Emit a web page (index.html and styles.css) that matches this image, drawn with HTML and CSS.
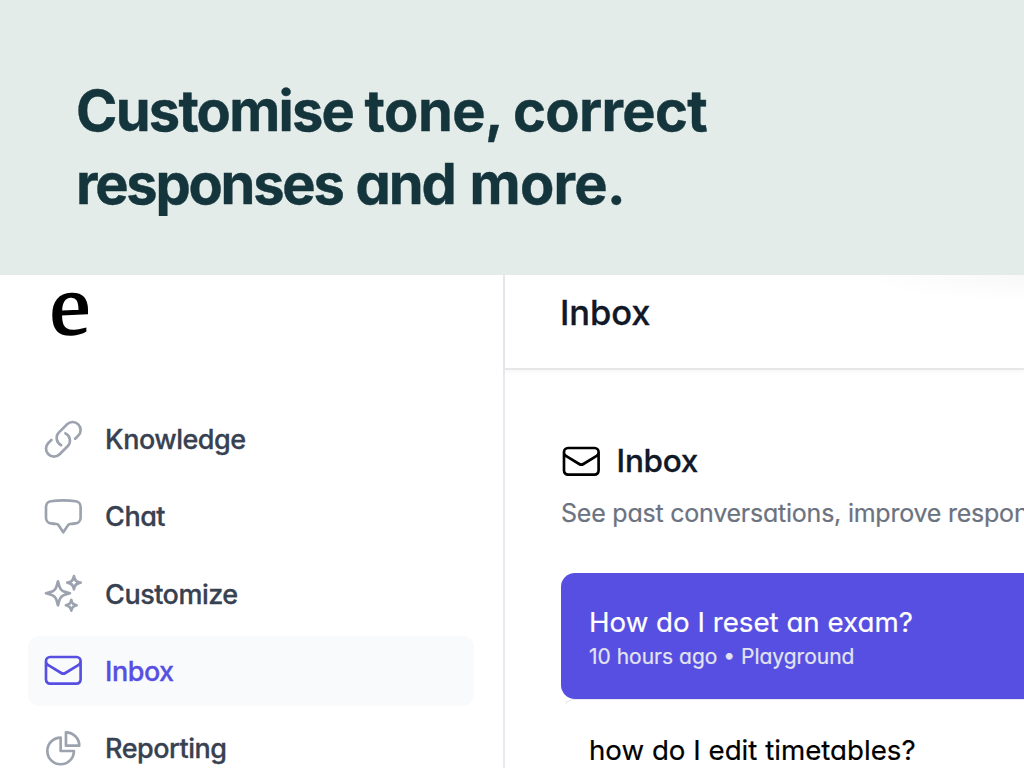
FILE: index.html
```html
<!DOCTYPE html>
<html lang="en">
<head>
<meta charset="utf-8">
<title>Inbox</title>
<link rel="stylesheet" href="styles.css">
</head>
<body>
<svg class="sprite" aria-hidden="true">
  <symbol id="mail" viewBox="0 0 24 24"><path d="M21.75 6.75v10.5a2.25 2.25 0 01-2.25 2.25h-15a2.25 2.25 0 01-2.25-2.25V6.75m19.5 0A2.25 2.25 0 0019.5 4.5h-15a2.25 2.25 0 00-2.25 2.25m19.5 0v.243a2.25 2.25 0 01-1.07 1.916l-7.5 4.615a2.25 2.25 0 01-2.36 0L3.32 8.91a2.25 2.25 0 01-1.07-1.916V6.75"/></symbol>
</svg>
<header class="hero">
  <h1 class="hero-title"><span class="line"><span class="snug">Customise</span> <span class="loose">tone,</span> <span class="open">correct</span></span><span class="line"><span class="tightest">responses</span> <span class="tight">and</span> <span class="last">more.</span></span></h1>
</header>
<div class="app">
  <aside class="sidebar">
    <div class="logo"><span class="logo-letter">e</span></div>
    <nav class="nav">
      <a class="nav-item"><svg class="icon" viewBox="0 0 24 24"><path d="M13.19 8.688a4.5 4.5 0 011.242 7.244l-4.5 4.5a4.5 4.5 0 01-6.364-6.364l1.757-1.757m13.35-.622l1.757-1.757a4.5 4.5 0 00-6.364-6.364l-4.5 4.5a4.5 4.5 0 001.242 7.244"/></svg><span>Knowledge</span></a>
      <a class="nav-item"><svg class="icon" viewBox="0 0 24 24"><path d="M2.25 12.76c0 1.6 1.123 2.994 2.707 3.227 1.068.157 2.148.279 3.238.364.466.037.893.281 1.153.671L12 21l2.652-3.978c.26-.39.687-.634 1.153-.67 1.09-.086 2.17-.208 3.238-.365 1.584-.233 2.707-1.626 2.707-3.228V6.741c0-1.602-1.123-2.995-2.707-3.228A48.394 48.394 0 0012 3c-2.392 0-4.744.175-7.043.513C3.373 3.746 2.25 5.14 2.25 6.741v6.018z"/></svg><span>Chat</span></a>
      <a class="nav-item"><svg class="icon" viewBox="0 0 24 24"><path d="M9.813 15.904L9 18.75l-.813-2.846a4.5 4.5 0 00-3.09-3.09L2.25 12l2.846-.813a4.5 4.5 0 003.09-3.09L9 5.25l.813 2.846a4.5 4.5 0 003.09 3.09L15.75 12l-2.846.813a4.5 4.5 0 00-3.09 3.09zM18.259 8.715L18 9.75l-.259-1.035a3.375 3.375 0 00-2.455-2.456L14.25 6l1.036-.259a3.375 3.375 0 002.455-2.456L18 2.25l.259 1.035a3.375 3.375 0 002.456 2.456L21.75 6l-1.035.259a3.375 3.375 0 00-2.456 2.456zM16.894 20.567L16.5 21.75l-.394-1.183a2.25 2.25 0 00-1.423-1.423L13.5 18.75l1.183-.394a2.25 2.25 0 001.423-1.423l.394-1.183.394 1.183a2.25 2.25 0 001.423 1.423l1.183.394-1.183.394a2.25 2.25 0 00-1.423 1.423z"/></svg><span>Customize</span></a>
      <a class="nav-item active"><svg class="icon"><use href="#mail"/></svg><span>Inbox</span></a>
      <a class="nav-item"><svg class="icon" viewBox="0 0 24 24"><path d="M10.5 6a7.5 7.5 0 107.5 7.5h-7.5V6z"/><path d="M13.5 10.5H21A7.5 7.5 0 0013.5 3v7.5z"/></svg><span>Reporting</span></a>
    </nav>
  </aside>
  <main class="main">
    <div class="topbar"><h2 class="page-title">Inbox</h2></div>
    <section class="content">
      <div class="section-head"><svg class="icon"><use href="#mail"/></svg><h3 class="section-title">Inbox</h3></div>
      <p class="description">See past conversations, improve responses</p>
      <div class="list">
        <article class="card selected">
          <p class="question">How do I reset an exam?</p>
          <p class="meta">10 hours ago • Playground</p>
        </article>
        <article class="card">
          <p class="question">how do I edit timetables?</p>
        </article>
      </div>
    </section>
  </main>
</div>
</body>
</html>
```
FILE: styles.css
```css
* { box-sizing: border-box; }
body {
  margin: 0;
  width: 1024px;
  height: 768px;
  overflow: hidden;
  display: flex;
  flex-direction: column;
  background: #fff;
  font-family: Inter, "Liberation Sans", sans-serif;
  font-feature-settings: "cv11";
}
h1, h2, h3, p { margin: 0; white-space: nowrap; }
.sprite { position: absolute; width: 0; height: 0; }
.hero {
  flex: none;
  height: 275px;
  padding: 75px 76px 0;
  background: #e4ece9;
}
.hero-title {
  color: #15353d;
  font-size: 56px;
  font-weight: 700;
  line-height: 73px;
  letter-spacing: -1.5px;
  -webkit-text-stroke: .4px #15353d;
}
.line { display: block; }
.snug { letter-spacing: -1.75px; }
.loose { letter-spacing: -.5px; margin-left: -.4px; }
.open { letter-spacing: -.7px; margin-left: -2px; }
.tightest { letter-spacing: -2.25px; }
.tight { letter-spacing: -2.1px; margin-left: 1.3px; }
.last { letter-spacing: -.7px; margin-left: 3px; }
.app { flex: 1; min-height: 0; display: flex; overflow: hidden; }
.sidebar {
  flex: none;
  width: 505px;
  padding: 0 29px 0 28px;
  border-right: 2px solid #e8e9ef;
}
.logo { height: 129.4px; padding: 1.5px 0 0 22.5px; color: #000; }
.logo-letter {
  display: block;
  width: 42px;
  font: 86px/56px "Liberation Serif", serif;
  -webkit-text-stroke: 1.6px #000;
  transform: skewY(-3deg) scaleX(1.07);
}
.nav { display: flex; flex-direction: column; gap: 7.6px; }
.nav-item {
  flex: none;
  height: 69.6px;
  padding-left: 14px;
  display: flex;
  align-items: center;
  gap: 20.5px;
  border-radius: 11px;
  color: #374151;
  font-size: 27px;
  font-weight: 500;
  letter-spacing: -0.5px;
}
.nav-item span { padding-top: 1px; -webkit-text-stroke: .3px currentColor; }
.icon {
  flex: none;
  width: 42.6px;
  height: 42.6px;
  fill: none;
  stroke: currentColor;
  stroke-width: 1.5;
  stroke-linecap: round;
  stroke-linejoin: round;
}
.nav-item .icon { color: #9ca3af; }
.nav-item.active, .nav-item.active .icon { color: #574fe2; }
.nav-item.active { background: #f9fafc; }
.main { flex: 1; min-width: 0; display: flex; flex-direction: column; }
.topbar {
  flex: none;
  height: 95px;
  padding: 16px 55px 0;
  border-bottom: 2px solid #e7e7ea;
  box-shadow: 0 2px 5px rgba(0, 0, 0, .04);
  background: radial-gradient(ellipse 165px 26px at 520px 0, #f8f8f8, #fff);
}
.page-title { color: #111827; font-size: 34.5px; font-weight: 500; line-height: 44px; letter-spacing: -.1px; -webkit-text-stroke: .3px #111827; }
.content { padding: 70px 0 0 56px; overflow: hidden; flex: 1; }
.section-head { display: flex; align-items: center; height: 42px; margin-left: -1px; gap: 14px; color: #000; }
.section-title { color: #111827; font-size: 31.5px; font-weight: 500; letter-spacing: -.3px; padding-bottom: 2px; -webkit-text-stroke: .3px #111827; }
.description { margin-top: 14px; color: #6b7280; font-size: 25px; line-height: 34px; letter-spacing: -.23px; -webkit-text-stroke: .2px #6b7280; }
.list { margin-top: 43px; }
.card {
  height: 126px;
  padding: 31px 27px;
  border: 1px solid transparent;
  border-right: 0;
  border-radius: 14px 0 0 14px;
  color: #000;
}
.card + .card { border-top-color: #e8e9ef; padding-top: 33px; }
.card.selected { background: #574fe2; color: #fff; }
.question { font-size: 27.7px; line-height: 34px; -webkit-text-stroke: .2px currentColor; }
.meta { font-size: 21px; line-height: 36px; color: #e2e4ee; -webkit-text-stroke: .2px currentColor; }
```
